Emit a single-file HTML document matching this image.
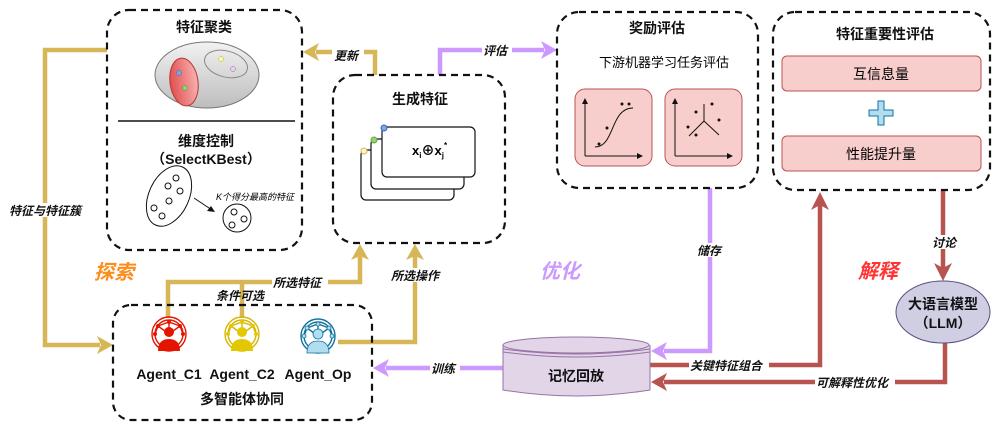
<!DOCTYPE html>
<html><head><meta charset="utf-8"><style>
body{margin:0;background:#fff}
svg{display:block}
text{font-family:"Liberation Sans","Noto Sans CJK SC",sans-serif}
.t{font-weight:bold;font-size:14px;text-anchor:middle;fill:#111}
.i{font-style:italic;font-weight:bold;font-size:12px;fill:#111}
.d{fill:none;stroke:#111;stroke-width:2.2;stroke-dasharray:7,5}
.g{fill:none;stroke:#D6B656;stroke-width:4.5}
.p{fill:none;stroke:#CC99FF;stroke-width:4.5}
.r{fill:none;stroke:#B85450;stroke-width:4.5}
</style></head><body>
<svg width="1000" height="430" viewBox="0 0 1000 430" xmlns="http://www.w3.org/2000/svg">
<path class="g" d="M107 50 H45 V345 H100"/><polygon points="113,345 97,336 101,345 97,354" fill="#D6B656"/>
<path class="g" d="M375 75 V52 H316"/><polygon points="303,52 319,43 315,52 319,61" fill="#D6B656"/>
<path class="g" d="M168 318 V282 H360 V256"/><polygon points="360,244 351,260 360,256 369,260" fill="#D6B656"/>
<path class="g" d="M242 318 V282"/>
<path class="g" d="M338 342 H415 V256"/><polygon points="415,244 406,260 415,256 424,260" fill="#D6B656"/>
<path class="p" d="M440 75 V50 H544"/><polygon points="557,50 541,41 545,50 541,59" fill="#CC99FF"/>
<path class="p" d="M710 188 V351 H664"/><polygon points="651,351 667,342 663,351 667,360" fill="#CC99FF"/>
<path class="p" d="M503 368 H386"/><polygon points="373,368 389,359 385,368 389,377" fill="#CC99FF"/>
<path class="r" d="M650 365 H820 V205"/><polygon points="820,192 811,210 820,205 829,210" fill="#B85450"/>
<path class="r" d="M943 190 V268"/><polygon points="943,281 934,263 943,268 952,263" fill="#B85450"/>
<path class="r" d="M945 343 V382 H664"/><polygon points="651,382 667,373 663,382 667,391" fill="#B85450"/>

<rect class="d" x="107" y="10" width="195" height="240" rx="22"/>
<text class="t" x="204" y="32">特征聚类</text>
<defs><linearGradient id="gg" x1="0" y1="0" x2="0" y2="1"><stop offset="0" stop-color="#f2f2f2"/><stop offset="1" stop-color="#bdbdbd"/></linearGradient>
<linearGradient id="rg" x1="0" y1="0" x2="1" y2="0"><stop offset="0" stop-color="#e05050"/><stop offset="1" stop-color="#f8b0b0"/></linearGradient></defs>
<ellipse cx="207" cy="75" rx="52" ry="33" fill="url(#gg)" stroke="#777"/>
<ellipse cx="184" cy="82" rx="14" ry="24" fill="url(#rg)" stroke="#b33" transform="rotate(-8 184 82)"/>
<ellipse cx="226" cy="64" rx="22" ry="13" fill="none" stroke="#888" transform="rotate(15 226 64)"/>
<circle cx="179" cy="73" r="2.5" fill="#7ea6e0" stroke="#36c" stroke-width=".5"/>
<circle cx="185" cy="88" r="2.5" fill="#97d077" stroke="#393" stroke-width=".5"/>
<circle cx="221" cy="59" r="2.5" fill="#ffff88" stroke="#aa8" stroke-width=".5"/>
<circle cx="233" cy="69" r="2.5" fill="#e1d5e7" stroke="#96a" stroke-width=".5"/>
<line x1="118" y1="121" x2="295" y2="121" stroke="#111" stroke-width="1.5"/>
<text class="t" x="206" y="146">维度控制</text>
<text class="t" x="206" y="164">（SelectKBest）</text>
<ellipse cx="169" cy="196" rx="20" ry="32" fill="none" stroke="#111" transform="rotate(25 169 196)"/>
<g fill="none" stroke="#111"><circle cx="176" cy="178" r="3"/><circle cx="168" cy="186" r="3"/><circle cx="180" cy="191" r="3"/><circle cx="169" cy="201" r="3"/><circle cx="154" cy="208" r="3"/><circle cx="162" cy="216" r="3"/>
<circle cx="237" cy="218" r="14"/><circle cx="234" cy="212" r="3"/><circle cx="244" cy="219" r="3"/><circle cx="232" cy="225" r="3"/></g>
<line x1="194" y1="198" x2="212" y2="210" stroke="#111"/><polygon points="215,212 207,211 211,206" fill="#111"/>
<text x="216" y="200" font-size="9" font-style="italic">K个得分最高的特征</text>

<rect class="d" x="333" y="75" width="172" height="168" rx="22"/>
<text class="t" x="420" y="104">生成特征</text>
<rect x="361" y="150" width="93" height="50" rx="5" fill="#fff" stroke="#111" stroke-width="1.2"/>
<rect x="371" y="139" width="93" height="50" rx="5" fill="#fff" stroke="#111" stroke-width="1.2"/>
<rect x="382" y="127" width="93" height="50" rx="5" fill="#fff" stroke="#111" stroke-width="1.2"/>
<circle cx="364" cy="151" r="3" fill="#fff2cc" stroke="#d6b656"/>
<circle cx="374" cy="140" r="3" fill="#97d077" stroke="#6a4"/>
<circle cx="384" cy="128" r="3" fill="#7ea6e0" stroke="#36c"/>
<text x="412" y="155" font-size="13" font-weight="bold">x<tspan font-size="8" dy="3">i</tspan><tspan dy="-3">⊕x</tspan><tspan font-size="8" dy="3">j</tspan><tspan font-size="8" dy="-10">*</tspan></text>

<rect class="d" x="557" y="12" width="201" height="176" rx="22"/>
<text class="t" x="657" y="33">奖励评估</text>
<text x="664" y="67" font-size="13" text-anchor="middle">下游机器学习任务评估</text>
<rect x="575" y="89" width="77" height="77" rx="10" fill="#f8cecc" stroke="#b85450"/>
<rect x="665" y="89" width="77" height="77" rx="10" fill="#f8cecc" stroke="#b85450"/>
<g stroke="#111" fill="none" stroke-width="1">
<path d="M585 156 V102 M585 156 H638"/><path d="M675 156 V102 M675 156 H728"/>
<path d="M595 147 C615 147 610 108 633 108"/><path d="M704 104 V121 L689 136 M704 121 L719 135"/></g>
<g fill="#111"><polygon points="585,98 582,104 588,104"/><polygon points="643,156 637,153 637,159"/><polygon points="675,98 672,104 678,104"/><polygon points="733,156 727,153 727,159"/>
<circle cx="599" cy="144" r="1.5"/><circle cx="607" cy="128" r="1.5"/><circle cx="622" cy="104" r="1.5"/><circle cx="629" cy="104" r="1.5"/>
<circle cx="696" cy="112" r="1.5"/><circle cx="712" cy="104" r="1.5"/><circle cx="719" cy="120" r="1.5"/><circle cx="688" cy="127" r="1.5"/><circle cx="696" cy="135" r="1.5"/></g>

<rect class="d" x="773" y="12" width="217" height="178" rx="22"/>
<text class="t" x="885" y="39">特征重要性评估</text>
<rect x="782" y="56" width="199" height="35" rx="5" fill="#f8cecc" stroke="#b85450"/>
<text x="881" y="79" font-size="14" text-anchor="middle">互信息量</text>
<path d="M878 101 h6 v9 h9 v6 h-9 v9 h-6 v-9 h-9 v-6 h9 z" fill="#b1ddf0" stroke="#10739e"/>
<rect x="782" y="136" width="199" height="35" rx="5" fill="#f8cecc" stroke="#b85450"/>
<text x="881" y="159" font-size="14" text-anchor="middle">性能提升量</text>

<ellipse cx="943" cy="312" rx="47" ry="31" fill="#d0cee2" stroke="#56517e"/>
<text class="t" x="943" y="309">大语言模型</text>
<text class="t" x="943" y="328">（LLM）</text>

<path d="M503 345 V390 Q576 402 650 390 V345" fill="#e1d5e7" stroke="#9673a6"/>
<ellipse cx="576" cy="345" rx="73" ry="8" fill="#e1d5e7" stroke="#9673a6"/>
<path d="M503 349 Q576 359 650 349 M503 352 Q576 362 650 352" fill="none" stroke="#9673a6"/>
<text class="t" x="576" y="381" font-size="15">记忆回放</text>

<rect class="d" x="113" y="305" width="259" height="115" rx="18"/>
<g stroke-width="1.4">
<g fill="none" stroke="#e51400"><circle cx="169" cy="334" r="17"/><circle cx="169" cy="334" r="14"/><path d="M158 326 L169 322 L180 326 L183 334 M158 326 L155 334 M158 326 L169 334 L180 326 M169 322 V330"/></g>
<g fill="#e51400"><circle cx="169" cy="332" r="5"/><path d="M158 351 Q158 339 169 339 Q180 339 180 351 Z"/><circle cx="169" cy="322" r="2"/><circle cx="158" cy="326" r="2"/><circle cx="180" cy="326" r="2"/><circle cx="155" cy="334" r="2"/><circle cx="183" cy="334" r="2"/></g>
<g fill="none" stroke="#d7b500"><circle cx="242" cy="334" r="17"/><circle cx="242" cy="334" r="14"/><path d="M231 326 L242 322 L253 326 L256 334 M231 326 L228 334 M231 326 L242 334 L253 326 M242 322 V330"/></g>
<g fill="#e3c800"><circle cx="242" cy="332" r="5"/><path d="M231 351 Q231 339 242 339 Q253 339 253 351 Z"/><circle cx="242" cy="322" r="2"/><circle cx="231" cy="326" r="2"/><circle cx="253" cy="326" r="2"/><circle cx="228" cy="334" r="2"/><circle cx="256" cy="334" r="2"/></g>
<g fill="none" stroke="#10739e"><circle cx="318" cy="336" r="17"/><circle cx="318" cy="336" r="14"/><path d="M307 328 L318 324 L329 328 L332 336 M307 328 L304 336 M307 328 L318 336 L329 328 M318 324 V332"/></g>
<g fill="#b1ddf0" stroke="#10739e" stroke-width=".8"><circle cx="318" cy="334" r="5"/><path d="M307 353 Q307 341 318 341 Q329 341 329 353 Z"/><circle cx="318" cy="324" r="2"/><circle cx="307" cy="328" r="2"/><circle cx="329" cy="328" r="2"/><circle cx="304" cy="336" r="2"/><circle cx="332" cy="336" r="2"/></g>
</g>
<text class="t" x="169" y="379" font-size="13">Agent_C1</text>
<text class="t" x="242" y="379" font-size="13">Agent_C2</text>
<text class="t" x="318" y="379" font-size="13">Agent_Op</text>
<text class="t" x="242" y="404">多智能体协同</text>

<rect x="332" y="48" width="32" height="14" fill="#fff"/><text class="i" x="334" y="60">更新</text>
<rect x="482" y="43" width="30" height="14" fill="#fff"/><text class="i" x="483" y="55">评估</text>
<rect x="696" y="243" width="28" height="14" fill="#fff"/><text class="i" x="697" y="255">储存</text>
<rect x="430" y="361" width="30" height="14" fill="#fff"/><text class="i" x="431" y="373">训练</text>
<rect x="689" y="358" width="80" height="14" fill="#fff"/><text class="i" x="690" y="370">关键特征组合</text>
<rect x="815" y="375" width="80" height="14" fill="#fff"/><text class="i" x="816" y="387">可解释性优化</text>
<rect x="931" y="235" width="28" height="14" fill="#fff"/><text class="i" x="932" y="247">讨论</text>
<rect x="272" y="275" width="56" height="14" fill="#fff"/><text class="i" x="273" y="287">所选特征</text>
<text class="i" x="216" y="300">条件可选</text>
<rect x="390" y="268" width="54" height="14" fill="#fff"/><text class="i" x="391" y="280">所选操作</text>
<rect x="8" y="203" width="78" height="14" fill="#fff"/><text class="i" x="9" y="215">特征与特征簇</text>
<text x="94" y="279" font-size="20" font-weight="bold" font-style="italic" fill="#FF8C1A">探索</text>
<text x="540" y="278" font-size="20" font-weight="bold" font-style="italic" fill="#CC99FF">优化</text>
<text x="858" y="278" font-size="20" font-weight="bold" font-style="italic" fill="#FF3333">解释</text>
</svg>
</body></html>
